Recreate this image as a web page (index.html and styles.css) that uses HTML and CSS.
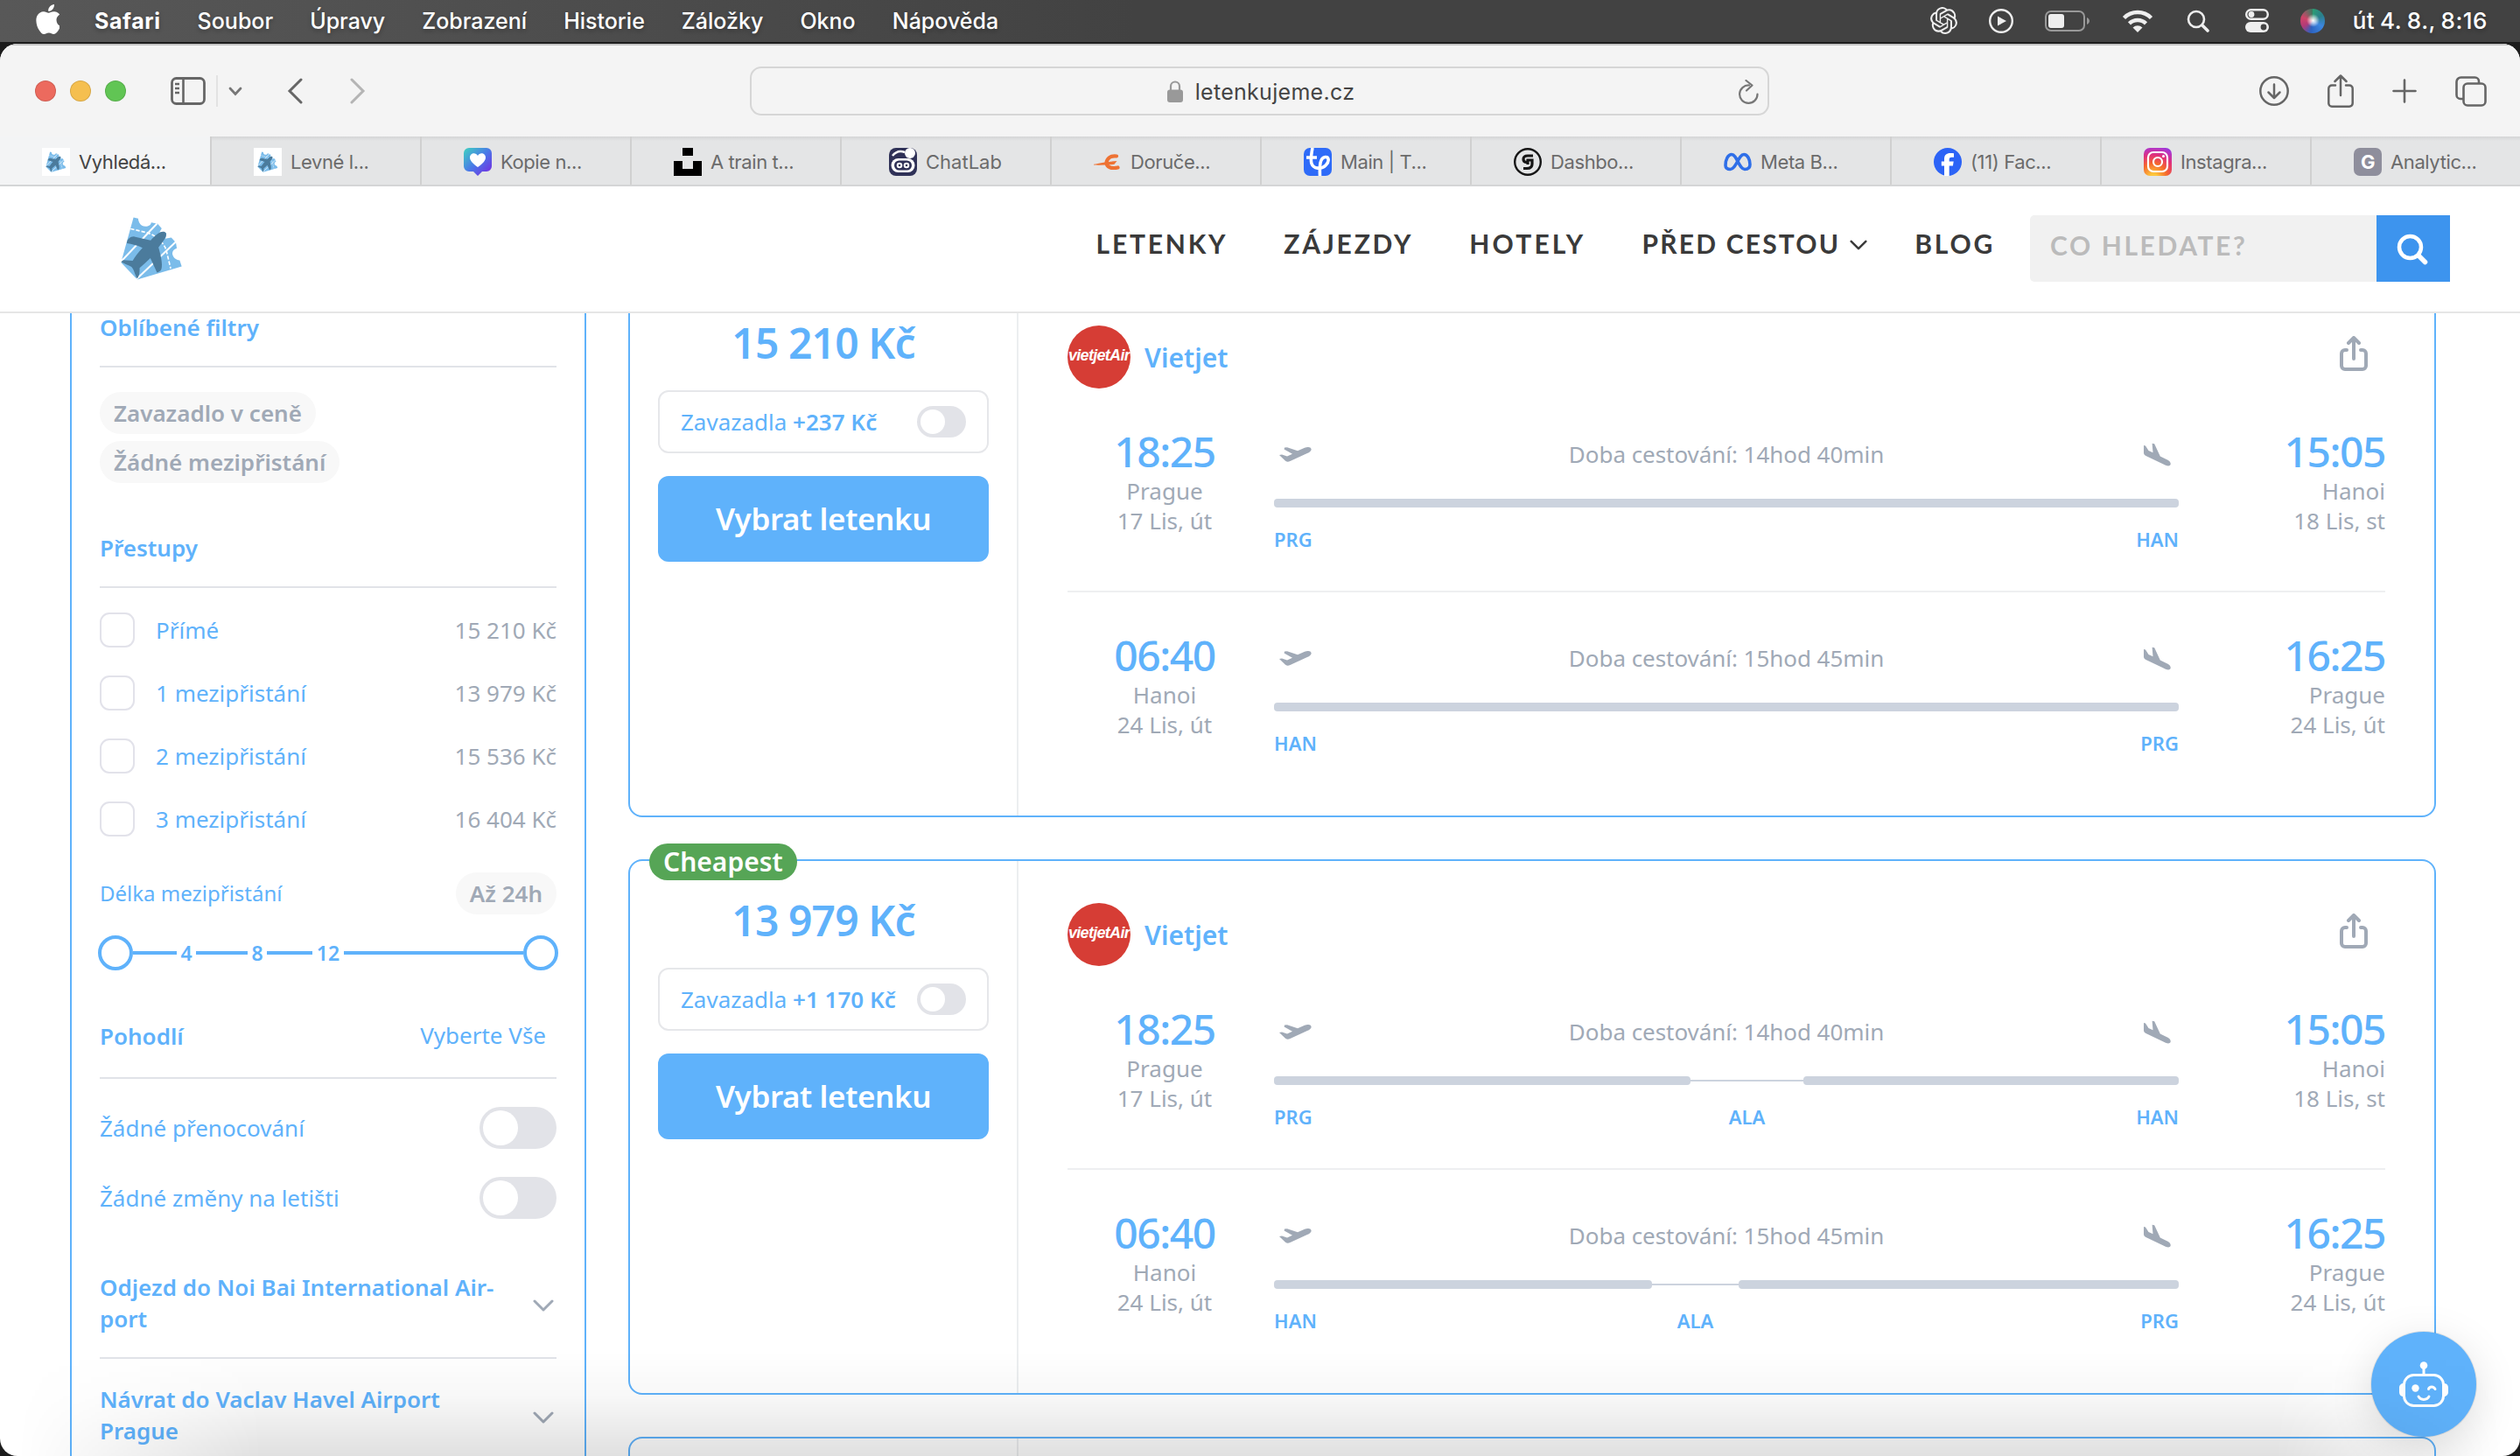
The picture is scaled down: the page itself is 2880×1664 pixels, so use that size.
FILE: index.html
```html
<!DOCTYPE html>
<html lang="cs">
<head>
  <meta charset="UTF-8" />
  <meta name="viewport" content="width=device-width, initial-scale=1.0" />
  <title>Vyhledávání letenek - letenkujeme.cz</title>
  <link rel="stylesheet" href="styles.css">
</head>
<body>
  <!-- shared icons -->
  <svg class="sprite" width="0" height="0">
    <symbol id="i-logo" viewBox="110 80 220 225">
      <path fill="#7bbcea" d="M157 87l16 4c2 20 14 27 25 27 12 0 19-6 20-14l22 5 14 16-8 14c10-4 22-3 24 4 0 8-2 14-4 17l21-4 16 18 3 19c-11 3-16 11-15 20 2 12 12 20 25 22l7 21-153 45-56-59z"/>
      <path fill="none" stroke="#fff" stroke-width="6" d="M112 241L238 108M168 299L304 170"/>
      <path fill="none" stroke="#fff" stroke-width="5" stroke-dasharray="13 6" d="M147 126l62 15c25 10 50 30 60 56l16 66"/>
      <path fill="#4b7b9c" d="M268 140c6 10-6 27-25 50 6 20 16 58 10 75-3 8-10 11-15 12l-23-50c-12 12-25 23-37 34 0 12 0 26-8 36-8-10-10-30-20-40-11-6-25-10-36-17l8-6 32 2c8-12 20-30 34-44-18-9-36-13-54-16 1-14 12-24 26-23l56 13c18-20 40-38 52-26z"/>
    </symbol>
    <symbol id="i-share" viewBox="0 0 32 40">
      <path fill="none" stroke="currentColor" stroke-width="4" stroke-linecap="round" stroke-linejoin="round" d="M8 16H6a4 4 0 0 0-4 4v14a4 4 0 0 0 4 4h20a4 4 0 0 0 4-4V20a4 4 0 0 0-4-4h-2M16 26V3M10 8l6-6 6 6"/>
    </symbol>
    <symbol id="i-takeoff" viewBox="0 0 37 17">
      <path fill="currentColor" d="M0 9l3-.6 6 2.100 6-2.700L5.600 2.600 6 .5l3-.2 12 3.900 8-3.400c4-1.500 7-.8 7.500 1.200.6 2-1.500 3.700-4.500 5L13 15.700c-3 1.400-5 1.200-6.500-.4z"/>
    </symbol>
    <symbol id="i-landing" viewBox="0 0 31 27">
      <path fill="currentColor" d="M0 3l2 .6L5.500 9l5 2.200L9.600.8l2.600.5 6.600 14.200 8.700 4.200c2.800 1.600 3.700 3.700 3 5.300-.8 1.700-2.700 1.800-5.500.7L2.500 15C.8 14 0 13 0 11.500z"/>
    </symbol>
    <symbol id="i-chev" viewBox="0 0 24 14">
      <path fill="none" stroke="currentColor" stroke-width="3" stroke-linecap="round" stroke-linejoin="round" d="M2 2l10 10L22 2"/>
    </symbol>
  </svg>

  <!-- system menu bar -->
  <div class="menubar">
    <svg class="apple" viewBox="2 0 19 24"><path fill="#fff" d="M12.152 6.896c-.948 0-2.415-1.078-3.96-1.04-2.040.027-3.910 1.183-4.961 3.014-2.117 3.675-.546 9.103 1.519 12.090 1.013 1.454 2.208 3.090 3.792 3.039 1.520-.065 2.090-.987 3.935-.987 1.831 0 2.350.987 3.960.948 1.637-.026 2.676-1.480 3.676-2.948 1.156-1.688 1.636-3.325 1.662-3.415-.039-.013-3.182-1.221-3.220-4.857-.026-3.040 2.480-4.494 2.597-4.559-1.429-2.090-3.623-2.324-4.390-2.376-2-.156-3.675 1.090-4.610 1.090zM15.530 3.830c.843-1.012 1.400-2.427 1.245-3.830-1.207.052-2.662.805-3.532 1.818-.780.896-1.454 2.338-1.273 3.714 1.338.104 2.715-.688 3.559-1.701"/></svg>
    <span class="app">Safari</span>
    <span>Soubor</span>
    <span>Úpravy</span>
    <span>Zobrazení</span>
    <span>Historie</span>
    <span>Záložky</span>
    <span>Okno</span>
    <span>Nápověda</span>
    <div class="status">
      <svg width="31" height="31" viewBox="0 0 24 24"><path fill="#eee" d="M22.2819 9.8211a5.9847 5.9847 0 0 0-.5157-4.9108 6.0462 6.0462 0 0 0-6.5098-2.9A6.0651 6.0651 0 0 0 4.9807 4.1818a5.9847 5.9847 0 0 0-3.9977 2.9 6.0462 6.0462 0 0 0 .7427 7.0966 5.98 5.98 0 0 0 .511 4.9107 6.051 6.051 0 0 0 6.5146 2.9001A5.9847 5.9847 0 0 0 13.2599 24a6.0557 6.0557 0 0 0 5.7718-4.2058 5.9894 5.9894 0 0 0 3.9977-2.9001 6.0557 6.0557 0 0 0-.7475-7.0729zm-9.022 12.6081a4.4755 4.4755 0 0 1-2.8764-1.0408l.1419-.0804 4.7783-2.7582a.7948.7948 0 0 0 .3927-.6813v-6.7369l2.02 1.1686a.071.071 0 0 1 .038.052v5.5826a4.504 4.504 0 0 1-4.4945 4.4944zm-9.6607-4.1254a4.4708 4.4708 0 0 1-.5346-3.0137l.142.0852 4.783 2.7582a.7712.7712 0 0 0 .7806 0l5.8428-3.3685v2.3324a.0804.0804 0 0 1-.0332.0615L9.74 19.9502a4.4992 4.4992 0 0 1-6.1408-1.6464zM2.3408 7.8956a4.485 4.485 0 0 1 2.3655-1.9728V11.6a.7664.7664 0 0 0 .3879.6765l5.8144 3.3543-2.0201 1.1685a.0757.0757 0 0 1-.071 0l-4.8303-2.7865A4.504 4.504 0 0 1 2.3408 7.872zm16.5963 3.8558L13.1038 8.364 15.1192 7.2a.0757.0757 0 0 1 .071 0l4.8303 2.7913a4.4944 4.4944 0 0 1-.6765 8.1042v-5.6772a.79.79 0 0 0-.407-.667zm2.0107-3.0231l-.142-.0852-4.7735-2.7818a.7759.7759 0 0 0-.7854 0L9.409 9.2297V6.8974a.0662.0662 0 0 1 .0284-.0615l4.8303-2.7866a4.4992 4.4992 0 0 1 6.6802 4.66zM8.3065 12.863l-2.02-1.1638a.0804.0804 0 0 1-.038-.0567V6.0742a4.4992 4.4992 0 0 1 7.3757-3.4537l-.142.0805L8.704 5.459a.7948.7948 0 0 0-.3927.6813zm1.0976-2.3654l2.602-1.4998 2.6069 1.4998v2.9994l-2.5974 1.4997-2.6067-1.4997Z"/></svg>
      <svg width="28" height="28" viewBox="0 0 28 28"><circle cx="14" cy="14" r="12.800" fill="none" stroke="#eee" stroke-width="2.400"/><path fill="#eee" d="M10 8.500v11l10-5.500z"/></svg>
      <svg width="51" height="24" viewBox="0 0 51 24"><rect x="1" y="1" width="44" height="22" rx="6" fill="none" stroke="#999" stroke-width="2"/><rect x="4" y="4" width="18" height="16" rx="3" fill="#eee"/><path fill="#999" d="M48 8c4 2 4 6 0 8z"/></svg>
      <svg width="38" height="26" viewBox="0 0 38 26"><g fill="none" stroke="#eee" stroke-width="4.500"><path d="M3.500 9.500a22 22 0 0 1 31 0"/><path d="M9.500 15.800a13.500 13.500 0 0 1 19 0"/></g><path fill="#eee" d="M19 26l-5.500-5.500a8 8 0 0 1 11 0z"/></svg>
      <svg width="32" height="26" viewBox="0 0 32 26"><g fill="none" stroke="#eee" stroke-width="2.600" stroke-linecap="round"><circle cx="12" cy="11" r="9"/><path stroke-width="3.600" d="M19 18l6 6"/></g></svg>
      <svg width="27" height="27" viewBox="0 0 27 27"><rect x="1.200" y="1.200" width="24.600" height="10.600" rx="5.300" fill="none" stroke="#eee" stroke-width="2.400"/><circle cx="7" cy="6.500" r="3.400" fill="#eee"/><rect y="15" width="27" height="12" rx="6" fill="#eee"/><circle cx="21" cy="21" r="3.400" fill="#444"/></svg>
      <span class="siri"></span>
      <span class="clock">út 4. 8., 8:16</span>
    </div>
  </div>

  <div class="window">
    <div class="toolbar">
      <div class="toolbar-left">
        <span class="light red"></span>
        <span class="light yellow"></span>
        <span class="light green"></span>
        <svg class="t-sidebar" width="40" height="32" viewBox="0 0 40 32"><rect x="1.500" y="1.500" width="37" height="29" rx="5" fill="none" stroke="#666" stroke-width="2.800"/><path stroke="#666" stroke-width="2.600" d="M14.500 2v28M5 8h5M5 13h5M5 18h5"/></svg>
        <span class="t-sep"></span>
        <svg class="t-down" width="16" height="11" viewBox="0 0 16 11"><path fill="none" stroke="#777" stroke-width="2.800" stroke-linecap="round" d="M2 2l6 6.500L14 2"/></svg>
        <svg class="t-back" width="18" height="30" viewBox="0 0 18 30"><path fill="none" stroke="#666" stroke-width="3" stroke-linecap="round" d="M16 2L3 15l13 13"/></svg>
        <svg class="t-fwd" width="18" height="30" viewBox="0 0 18 30"><path fill="none" stroke="#b4b4b4" stroke-width="3" stroke-linecap="round" d="M2 2l13 13L2 28"/></svg>
      </div>
      <div class="urlbar">
        <svg width="18" height="25" viewBox="0 0 18 25"><rect y="10.500" width="18" height="14.500" rx="3" fill="#999"/><path fill="none" stroke="#999" stroke-width="2.200" d="M4 11V6.500a5 5 0 0 1 10 0V11"/></svg>
        <span>letenkujeme.cz</span>
        <svg class="reload" width="24" height="28" viewBox="0 0 24 28"><path fill="none" stroke="#777" stroke-width="2.200" stroke-linecap="round" stroke-linejoin="round" d="M13 6.500a10.200 10.200 0 1 0 9.500 10M9.500 1l7 5.500-6.500 6"/></svg>
      </div>
      <div class="toolbar-right">
        <svg width="34" height="34" viewBox="0 0 34 34"><g fill="none" stroke="#666" stroke-width="2.500" stroke-linecap="round" stroke-linejoin="round"><circle cx="17" cy="17" r="15.700"/><path d="M17 9.500v15M10.500 18.500l6.500 6.500 6.500-6.500"/></g></svg>
        <svg width="30" height="38" viewBox="0 0 30 38"><g fill="none" stroke="#666" stroke-width="2.500" stroke-linecap="round" stroke-linejoin="round"><path d="M9 12.500H5a3.700 3.700 0 0 0-3.700 3.700v17A3.700 3.700 0 0 0 5 36.700h20a3.700 3.700 0 0 0 3.700-3.700V16.200a3.700 3.700 0 0 0-3.700-3.700h-4M15 24V2M8.500 8L15 1.500 21.500 8"/></g></svg>
        <svg width="28" height="28" viewBox="0 0 28 28"><path stroke="#666" stroke-width="2.600" stroke-linecap="round" d="M14 1.500v25M1.500 14h25"/></svg>
        <svg width="36" height="35" viewBox="0 0 36 35"><g fill="none" stroke="#666" stroke-width="2.600"><path d="M9 26H6a4.500 4.500 0 0 1-4.500-4.500v-15A5 5 0 0 1 6.500 1.500h16A4.500 4.500 0 0 1 27 6v2"/><rect x="9.500" y="8.500" width="25" height="25" rx="4.500"/></g></svg>
      </div>
    </div>

    <div class="tabs">
      <div class="tab active"><span class="fav fav-white"><svg width="24" height="26"><use href="#i-logo"/></svg></span>Vyhledá...</div>
      <div class="tab"><span class="fav fav-white"><svg width="24" height="26"><use href="#i-logo"/></svg></span>Levné l...</div>
      <div class="tab">
        <svg class="fav" viewBox="0 0 32 32"><defs><linearGradient id="g1" x1="0" y1="0" x2="1" y2="1"><stop offset="0" stop-color="#3fd3c0"/><stop offset=".5" stop-color="#4a78e8"/><stop offset="1" stop-color="#7a22e0"/></linearGradient></defs><path fill="url(#g1)" d="M6 0h20a6 6 0 0 1 6 6v15a6 6 0 0 1-6 6h-5l-5 5-5-5H6a6 6 0 0 1-6-6V6a6 6 0 0 1 6-6z"/><path fill="#fff" d="M16 22c-6-4.500-9-7.500-9-11 0-5 6.500-6.500 9-2 2.500-4.500 9-3 9 2 0 3.500-3 6.500-9 11z"/></svg>Kopie n...</div>
      <div class="tab"><svg class="fav" viewBox="0 0 32 32"><path d="M10 0h12v9H10zM0 15h10v9h12v-9h10v17H0z"/></svg>A train t...</div>
      <div class="tab tab-short"><svg class="fav" viewBox="0 0 32 32"><rect width="32" height="32" rx="8" fill="#2f3157"/><circle cx="24" cy="6" r="6" fill="#fff"/><path fill="none" stroke="#fff" stroke-width="2.500" d="M4 9c4-5 9-6 14-4"/><rect x="2.500" y="12" width="27" height="16" rx="8" fill="#fff"/><rect x="6" y="14.500" width="20" height="11" rx="5.500" fill="#2f3157"/><g fill="none" stroke="#fff" stroke-width="2"><circle cx="12" cy="20" r="2.300"/><circle cx="20" cy="20" r="2.300"/></g></svg>ChatLab</div>
      <div class="tab"><svg class="fav" viewBox="0 0 32 32"><path fill="none" stroke="#ee7233" stroke-width="4.200" stroke-linecap="round" d="M26 9.500c-7-1-11 3-11.500 7.500 0 5 6 7 13 5.500"/><path fill="#ee7233" d="M0 18.800c6-1.500 16-3 26.500-3.800l-3 3.800c-8 .8-16 1-23.500.8z"/></svg>Doruče...</div>
      <div class="tab"><svg class="fav" viewBox="0 0 32 32"><rect width="32" height="32" rx="7" fill="#2e6bf8"/><path fill="none" stroke="#fff" stroke-width="3.600" d="M10 0c-1.500 8-2.500 14-1 18 2 6 11 7 16 2 5-5 3.500-10-.5-9.500-6 .8-6.500 9-6 21.500M3 11h12"/></svg>Main | T...</div>
      <div class="tab"><svg class="fav" viewBox="0 0 32 32"><circle cx="16" cy="16" r="14.800" fill="none" stroke="#161616" stroke-width="2.400"/><path fill="none" stroke="#161616" stroke-width="3.200" d="M22 9h-6c-3.500 0-5 1.500-5 4s1.500 3.500 4 3.500M11 23.500h4c4 0 6-1.500 6-5V14h-5v5"/></svg>Dashbo...</div>
      <div class="tab"><svg class="fav" viewBox="0 0 32 32"><path fill="none" stroke="#2f6fe8" stroke-width="3.600" d="M2 20C2 13 5 7.500 9 7.500c6 0 8.500 17 15 17 4 0 6-2 6-5.500 0-6-3-11.500-7-11.500-6 0-9 17-15.500 17C4 24.500 2 23 2 20z"/></svg>Meta B...</div>
      <div class="tab"><svg class="fav" viewBox="0 0 32 32"><circle cx="16" cy="16" r="16" fill="#2c63f6"/><path fill="#fff" d="M12 32V20.500H8.800v-5H12V13c0-5 2.500-7 7-7 1.500 0 2.800.1 4 .3v4.500h-2.500c-2.200 0-2.800 1-2.800 2.700v2h5l-.8 5h-4.200V32z"/></svg>(11) Fac...</div>
      <div class="tab"><span class="fav fav-insta"><svg width="26" height="26" viewBox="0 0 26 26"><g fill="none" stroke="#fff" stroke-width="2.200"><rect x="2" y="2" width="22" height="22" rx="6"/><circle cx="13" cy="13" r="5"/></g><circle cx="19.500" cy="6.500" r="1.500" fill="#fff"/></svg></span>Instagra...</div>
      <div class="tab"><span class="fav fav-g">G</span>Analytic...</div>
    </div>

    <header class="site-header">
      <svg class="logo"><use href="#i-logo"/></svg>
      <nav class="nav">
        <a>LETENKY</a>
        <a>ZÁJEZDY</a>
        <a class="wide">HOTELY</a>
        <a class="has-sub">PŘED CESTOU<svg width="20" height="12"><use href="#i-chev"/></svg></a>
        <a>BLOG</a>
      </nav>
      <div class="search">
        <div class="search-input">CO HLEDATE?</div>
        <div class="search-btn"><svg width="36" height="36" viewBox="0 0 36 36"><g fill="none" stroke="#fff" stroke-width="4.500" stroke-linecap="round"><circle cx="15.500" cy="15.500" r="12.500"/><path stroke-width="5.500" d="M25 25l7.500 7.500"/></g></svg></div>
      </div>
    </header>

    <main class="content">
      <aside class="filters">
        <h3 class="filter-title">Oblíbené filtry</h3>
        <div class="chips">
          <span class="chip">Zavazadlo v ceně</span>
          <span class="chip">Žádné mezipřistání</span>
        </div>

        <h3 class="filter-title stops-title">Přestupy</h3>
        <div class="stops">
          <div class="stop"><i class="check"></i>Přímé<span class="price">15 210 Kč</span></div>
          <div class="stop"><i class="check"></i>1 mezipřistání<span class="price">13 979 Kč</span></div>
          <div class="stop"><i class="check"></i>2 mezipřistání<span class="price">15 536 Kč</span></div>
          <div class="stop"><i class="check"></i>3 mezipřistání<span class="price">16 404 Kč</span></div>
        </div>

        <div class="layover"><span class="layover-label">Délka mezipřistání</span><span class="chip">Až 24h</span></div>
        <div class="slider">
          <i class="handle"></i><i class="rail r1"></i><b>4</b><i class="rail r2"></i><b>8</b><i class="rail r3"></i><b>12</b><i class="rail r4"></i><i class="handle"></i>
        </div>

        <div class="filter-title comfort-title">Pohodlí<span class="select-all">Vyberte Vše</span></div>
        <div class="switch-row first">Žádné přenocování<i class="switch"></i></div>
        <div class="switch-row">Žádné změny na letišti<i class="switch"></i></div>

        <div class="fold"><span>Odjezd do Noi Bai International Air-<br>port</span><svg width="24" height="14"><use href="#i-chev"/></svg></div>
        <div class="fold second"><span>Návrat do Vaclav Havel Airport<br>Prague</span><svg width="24" height="14"><use href="#i-chev"/></svg></div>
      </aside>

      <section class="results">
        <article class="card">
          <div class="offer">
            <div class="offer-price">15 210 Kč</div>
            <div class="baggage"><span>Zavazadla <b>+237 Kč</b></span><i class="switch small"></i></div>
            <div class="select-btn">Vybrat letenku</div>
          </div>
          <div class="flights">
            <div class="airline">
              <span class="airline-logo">vietjetAir</span>Vietjet
              <svg class="share"><use href="#i-share"/></svg>
            </div>
            <div class="leg">
              <div class="point"><div class="time">18:25</div>Prague<br>17 Lis, út</div>
              <div class="route">
                <div class="duration"><svg width="37" height="17"><use href="#i-takeoff"/></svg>Doba cestování: 14hod 40min<svg width="31" height="27"><use href="#i-landing"/></svg></div>
                <div class="line"><i class="seg"></i></div>
                <div class="codes"><span>PRG</span><span>HAN</span></div>
              </div>
              <div class="point end"><div class="time">15:05</div>Hanoi<br>18 Lis, st</div>
            </div>
            <div class="divider"></div>
            <div class="leg">
              <div class="point"><div class="time">06:40</div>Hanoi<br>24 Lis, út</div>
              <div class="route">
                <div class="duration"><svg width="37" height="17"><use href="#i-takeoff"/></svg>Doba cestování: 15hod 45min<svg width="31" height="27"><use href="#i-landing"/></svg></div>
                <div class="line"><i class="seg"></i></div>
                <div class="codes"><span>HAN</span><span>PRG</span></div>
              </div>
              <div class="point end"><div class="time">16:25</div>Prague<br>24 Lis, út</div>
            </div>
          </div>
        </article>

        <article class="card">
          <span class="badge">Cheapest</span>
          <div class="offer">
            <div class="offer-price">13 979 Kč</div>
            <div class="baggage"><span>Zavazadla <b>+1 170 Kč</b></span><i class="switch small"></i></div>
            <div class="select-btn">Vybrat letenku</div>
          </div>
          <div class="flights">
            <div class="airline">
              <span class="airline-logo">vietjetAir</span>Vietjet
              <svg class="share"><use href="#i-share"/></svg>
            </div>
            <div class="leg">
              <div class="point"><div class="time">18:25</div>Prague<br>17 Lis, út</div>
              <div class="route">
                <div class="duration"><svg width="37" height="17"><use href="#i-takeoff"/></svg>Doba cestování: 14hod 40min<svg width="31" height="27"><use href="#i-landing"/></svg></div>
                <div class="line" style="grid-template-columns: 476fr 129fr 429fr"><i class="seg"></i><i class="gap"></i><i class="seg"></i></div>
                <div class="codes stopover" style="grid-template-columns: 476fr 129fr 429fr"><span>PRG</span><span>ALA</span><span>HAN</span></div>
              </div>
              <div class="point end"><div class="time">15:05</div>Hanoi<br>18 Lis, st</div>
            </div>
            <div class="divider"></div>
            <div class="leg">
              <div class="point"><div class="time">06:40</div>Hanoi<br>24 Lis, út</div>
              <div class="route">
                <div class="duration"><svg width="37" height="17"><use href="#i-takeoff"/></svg>Doba cestování: 15hod 45min<svg width="31" height="27"><use href="#i-landing"/></svg></div>
                <div class="line" style="grid-template-columns: 432fr 99fr 503fr"><i class="seg"></i><i class="gap"></i><i class="seg"></i></div>
                <div class="codes stopover" style="grid-template-columns: 432fr 99fr 503fr"><span>HAN</span><span>ALA</span><span>PRG</span></div>
              </div>
              <div class="point end"><div class="time">16:25</div>Prague<br>24 Lis, út</div>
            </div>
          </div>
        </article>

        <article class="card">
          <div class="offer"></div>
          <div class="flights"></div>
        </article>
      </section>

      <div class="chat-btn">
        <svg width="56" height="52" viewBox="0 0 56 52"><g fill="none" stroke="#fff" stroke-width="3" stroke-linecap="round"><rect x="5.500" y="15.500" width="45" height="35" rx="11"/><path d="M28 8v7M22 40c2 4.500 10 4.500 12 0M33.500 31.500c1-3.500 6-3.500 7.500 0"/></g><circle cx="28" cy="4.500" r="4.300" fill="#fff"/><circle cx="18.500" cy="30.500" r="4.200" fill="#fff"/><path fill="#fff" d="M5 25v15c-3 0-5-2-5-5v-5c0-3 2-5 5-5zM51 25v15c3 0 5-2 5-5v-5c0-3-2-5-5-5z"/></svg>
      </div>
    </main>
    <div class="dock-shadow"></div>
  </div>
</body>
</html>
```
FILE: styles.css
```css
:root {
  --blue: #5fb2fb;
  --gray: #a0a9b6;
  --line: #e1e3e8;
  --track: #ccd3de;
}

* {
  box-sizing: border-box;
}

body {
  margin: 0;
  width: 2880px;
  height: 1664px;
  overflow: hidden;
  background: #1c1c1c;
  font-family: "Noto Sans", sans-serif;
  font-size: 26px;
  color: var(--blue);
}

svg {
  flex: none;
  display: block;
}

i {
  font-style: normal;
}

.sprite {
  position: absolute;
}

/* menu bar */
.menubar {
  height: 48px;
  margin-bottom: 2px;
  padding: 1px 37px 2px 41px;
  display: flex;
  align-items: center;
  gap: 42px;
  background: linear-gradient(90deg, #585858, #424242 45%);
  color: #fff;
  font-family: Inter, sans-serif;
  font-size: 25px;
  font-weight: 500;
  line-height: 44px;
  white-space: nowrap;
  text-shadow: 0 2px 5px rgba(0, 0, 0, 0.3);
}

.apple {
  width: 27px;
  height: 34px;
  margin: -4px -2px 0 0;
}

.menubar .app {
  font-weight: 700;
  letter-spacing: 0.6px;
}

.status {
  margin-left: auto;
  display: flex;
  align-items: center;
  gap: 36px;
}

.siri {
  width: 28px;
  height: 28px;
  border-radius: 50%;
  background:
    radial-gradient(circle at 52% 48%, #fff 0, rgba(255, 255, 255, 0.6) 16%, transparent 36%),
    conic-gradient(from 0deg, #2c9c74, #2b7f8c 60deg, #3c86e0 120deg, #2c62c0 190deg, #b23a78 240deg, #d04468 290deg, #3c7a60);
}

.clock {
  margin-left: -4px;
  font-size: 26px;
  letter-spacing: 0.5px;
  word-spacing: -1.5px;
}

/* browser window */
.window {
  position: relative;
  height: 1614px;
  border-radius: 20px;
  overflow: hidden;
  background: #fff;
}

.toolbar {
  height: 106px;
  display: flex;
  align-items: center;
  background: #f4f4f4;
  border-top: 2px solid #c4c4c4;
}

.toolbar-left {
  width: 857px;
  padding-left: 40px;
  display: flex;
  align-items: center;
}

.light {
  width: 24px;
  height: 24px;
  margin-right: 16px;
  border-radius: 50%;
  border: 1px solid rgba(0, 0, 0, 0.12);
}

.red { background: #ec6a5e; }
.yellow { background: #f5bf4f; }
.green { background: #61c554; }

.t-sidebar {
  margin-left: 35px;
}

.t-sep {
  width: 2px;
  height: 36px;
  margin: 0 12px;
  background: #e3e3e3;
}

.t-back {
  margin: 0 54px 0 51px;
}

.urlbar {
  position: relative;
  width: 1165px;
  height: 56px;
  display: flex;
  align-items: center;
  justify-content: center;
  gap: 14px;
  padding: 1px 0 0 3px;
  border: 2px solid #d6d6d6;
  border-radius: 13px;
  font-family: Inter, sans-serif;
  font-size: 25px;
  letter-spacing: 0.3px;
  color: #444;
}

.urlbar .reload {
  position: absolute;
  right: 10px;
}

.toolbar-right {
  margin-left: auto;
  padding-right: 38px;
  display: flex;
  align-items: center;
  gap: 44px;
}

.tabs {
  height: 57px;
  display: flex;
  border-bottom: 2px solid #d4d5d6;
}

.tab {
  width: 240px;
  padding: 2px 0 0 50px;
  display: flex;
  align-items: center;
  gap: 10px;
  border-left: 2px solid #d0d0d0;
  background: linear-gradient(#d4d5d6, #e4e5e6 5px);
  font-family: Inter, sans-serif;
  font-size: 22px;
  letter-spacing: -0.4px;
  color: #6b6b6b;
  white-space: nowrap;
}

.tab:not(.active) {
  padding-left: 48px;
}

.tab.tab-short {
  padding-left: 54px;
  letter-spacing: 0;
}

.tab.active {
  padding-left: 46px;
  border-left-color: transparent;
  background: #f3f4f5;
  color: #444;
}

.fav {
  flex: none;
  width: 32px;
  height: 32px;
  display: flex;
  align-items: center;
  justify-content: center;
}

.fav-white {
  background: #fff;
}

.fav-insta {
  border-radius: 7px;
  background: radial-gradient(circle at 35% 105%, #fdc63c 10%, #f5672c 40%, #e0307c 65%, #b136c8 85%, #7a38f0);
}

.fav-g {
  border-radius: 7px;
  background: #8e8e9c;
  color: #fff;
  font-weight: 700;
}

/* site header */
.site-header {
  position: relative;
  z-index: 2;
  height: 145px;
  padding: 0 80px 0 137px;
  display: flex;
  align-items: flex-start;
  background: #fff;
  border-bottom: 2px solid #e6e6e6;
}

.logo {
  width: 73px;
  height: 75px;
  margin-top: 33px;
}

.nav {
  margin: 42px 40px 0 auto;
  display: flex;
  gap: 64px;
  font-family: Lato, sans-serif;
  font-size: 30px;
  font-weight: 700;
  letter-spacing: 2.8px;
  line-height: 46px;
  color: #3a3a3a;
}

.nav .wide {
  letter-spacing: 3.2px;
}

.has-sub {
  display: flex;
  align-items: center;
  gap: 11px;
  margin-right: -10px;
  letter-spacing: 2.2px;
}

.has-sub svg {
  margin-top: 3px;
}

.search {
  display: flex;
  margin-top: 33px;
  width: 480px;
  height: 76px;
}

.search-input {
  flex: 1;
  padding-left: 23px;
  border-radius: 5px 0 0 5px;
  background: #f1f1f1;
  color: #bbb;
  font: 700 30px/69px Lato, sans-serif;
  letter-spacing: 2.6px;
}

.search-btn {
  width: 84px;
  padding: 2px 2px 0 0;
  display: flex;
  align-items: center;
  justify-content: center;
  background: #3d94ee;
}

/* content */
.content {
  height: 1306px;
  padding-left: 80px;
  display: flex;
  align-items: flex-start;
  gap: 48px;
}

.filters {
  width: 590px;
  height: 1400px;
  padding: 0 32px;
  border: solid var(--blue);
  border-width: 0 2px;
}

.filter-title {
  margin: -2px 0 0;
  padding-bottom: 26px;
  border-bottom: 2px solid var(--line);
  font-size: 26px;
  font-weight: 600;
  line-height: 36px;
}

.chips {
  margin-top: 28px;
  display: flex;
  flex-direction: column;
  align-items: flex-start;
  gap: 8px;
}

.chip {
  padding: 0 16px;
  border-radius: 24px;
  background: #f8f8f8;
  color: var(--gray);
  font-size: 26px;
  font-weight: 600;
  line-height: 48px;
}

.stops-title {
  margin-top: 56px;
}

.stops {
  margin-top: 28px;
  display: flex;
  flex-direction: column;
  gap: 32px;
}

.stop {
  height: 40px;
  display: flex;
  align-items: center;
}

.check {
  width: 40px;
  height: 40px;
  margin-right: 24px;
  border: 2px solid #e2e2ea;
  border-radius: 11px;
}

.price {
  margin-left: auto;
  color: var(--gray);
}

.layover {
  margin-top: 41px;
  display: flex;
  align-items: center;
  justify-content: space-between;
  font-size: 24px;
}

.layover-label {
  padding-bottom: 2px;
}

.slider {
  margin: 24px -2px 0;
  height: 40px;
  display: flex;
  align-items: center;
  font-size: 23px;
}

.slider b {
  flex: none;
  width: 22px;
  text-align: center;
  font-weight: 600;
}

.slider b:nth-of-type(3) {
  width: 36px;
}

.handle {
  flex: none;
  width: 40px;
  height: 40px;
  border: 4px solid var(--blue);
  border-radius: 50%;
}

.rail {
  height: 4px;
  background: var(--blue);
}

.r1 { width: 50px; }
.r2 { width: 59px; }
.r3 { width: 52px; }
.r4 { flex: 1; }

.comfort-title {
  margin-top: 57px;
  padding-bottom: 29px;
  display: flex;
  justify-content: space-between;
}

.select-all {
  margin: -1px 12px 0 0;
  font-weight: 400;
}

.switch-row {
  margin-top: 32px;
  height: 48px;
  display: flex;
  align-items: center;
  justify-content: space-between;
}

.switch {
  flex: none;
  width: 88px;
  height: 48px;
  padding: 4px;
  border-radius: 24px;
  background: #e2e3e8;
}

.switch::before {
  content: "";
  display: block;
  width: 40px;
  height: 40px;
  border-radius: 50%;
  background: #fff;
}

.switch.small {
  width: 56px;
  height: 36px;
}

.switch.small::before {
  width: 28px;
  height: 28px;
}

.fold {
  margin-top: 60px;
  padding: 0 3px 26px 0;
  display: flex;
  align-items: center;
  justify-content: space-between;
  border-bottom: 2px solid var(--line);
  font-weight: 600;
  line-height: 36px;
}

.fold.second {
  margin-top: 28px;
}

.fold svg {
  margin-top: 5px;
  color: var(--gray);
}

/* result cards */
.results {
  width: 2066px;
  margin-top: -36px;
  display: flex;
  flex-direction: column;
  gap: 48px;
}

.card {
  position: relative;
  height: 612px;
  display: flex;
  border: 2px solid var(--blue);
  border-radius: 16px;
}

.badge {
  position: absolute;
  top: -20px;
  left: 22px;
  padding: 0 16px;
  border-radius: 21px;
  background: #56a556;
  color: #fff;
  font-size: 30px;
  font-weight: 600;
  line-height: 42px;
}

.offer {
  width: 444px;
  padding: 38px 32px 0;
  border-right: 2px solid #eceef0;
}

.offer-price {
  font-size: 48px;
  font-weight: 600;
  letter-spacing: -0.9px;
  line-height: 60px;
  text-align: center;
}

.baggage {
  margin-top: 24px;
  height: 72px;
  padding: 0 24px;
  display: flex;
  align-items: center;
  justify-content: space-between;
  border: 2px solid #e6e7ea;
  border-radius: 12px;
}

.baggage b {
  font-weight: 600;
}

.select-btn {
  margin-top: 26px;
  height: 98px;
  border-radius: 12px;
  background: var(--blue);
  color: #fff;
  font-size: 35px;
  font-weight: 600;
  letter-spacing: -0.4px;
  line-height: 98px;
  text-align: center;
}

.flights {
  flex: 1;
  padding: 48px 56px 0;
}

.airline {
  height: 72px;
  display: flex;
  align-items: center;
  font-size: 30px;
  font-weight: 600;
}

.airline-logo {
  width: 72px;
  height: 72px;
  margin-right: 16px;
  border-radius: 50%;
  overflow: hidden;
  display: flex;
  justify-content: center;
  background: #d63d35;
  color: #fff;
  font: italic 700 18px/69px "Liberation Sans", sans-serif;
  letter-spacing: -0.7px;
}

.share {
  width: 32px;
  height: 40px;
  margin: -8px 20px 0 auto;
  color: var(--gray);
}

.leg {
  margin-top: 42px;
  height: 147px;
  display: flex;
  color: var(--gray);
  line-height: 34px;
}

.point {
  width: 222px;
  text-align: center;
}

.point.end {
  width: 236px;
  text-align: right;
}

.time {
  padding-top: 1px;
  color: var(--blue);
  font-size: 48px;
  font-weight: 500;
  letter-spacing: -1.5px;
  line-height: 57px;
}

.route {
  width: 1034px;
  margin-left: 14px;
}

.leg .point {
  flex: none;
}

.duration {
  height: 84px;
  padding: 0 9px 18px 6px;
  display: flex;
  align-items: center;
  justify-content: space-between;
  letter-spacing: -0.05px;
}

.duration svg:last-child {
  margin-left: 3px;
}

.line {
  height: 10px;
  display: grid;
  align-items: center;
}

.seg {
  height: 10px;
  border-radius: 4px;
  background: var(--track);
}

.gap {
  height: 2px;
  background: var(--track);
}

.codes {
  margin-top: 19px;
  display: flex;
  justify-content: space-between;
  color: var(--blue);
  font-size: 22px;
  font-weight: 600;
}

.codes.stopover {
  display: grid;
}

.stopover span {
  text-align: center;
}

.stopover span:first-child {
  text-align: left;
}

.stopover span:last-child {
  text-align: right;
}

.divider {
  height: 2px;
  margin-top: 42px;
  background: #eeeff1;
}

.chat-btn {
  position: absolute;
  z-index: 3;
  left: 2710px;
  top: 1472px;
  width: 120px;
  height: 120px;
  display: flex;
  align-items: center;
  justify-content: center;
  border-radius: 50%;
  background: var(--blue);
  box-shadow: 0 0 0 1px rgba(0, 0, 0, 0.08), 0 12px 50px rgba(0, 0, 0, 0.13);
}

/* soft shade at the bottom edge of the screen */
.dock-shadow {
  position: absolute;
  z-index: 4;
  left: 0;
  right: 0;
  bottom: 0;
  height: 120px;
  background: linear-gradient(transparent, rgba(0, 0, 0, 0.03) 45%, rgba(0, 0, 0, 0.12));
  -webkit-mask-image: linear-gradient(90deg, transparent 20px, #000 300px, #000 2600px, transparent 2860px);
  mask-image: linear-gradient(90deg, transparent 20px, #000 300px, #000 2600px, transparent 2860px);
}
```
